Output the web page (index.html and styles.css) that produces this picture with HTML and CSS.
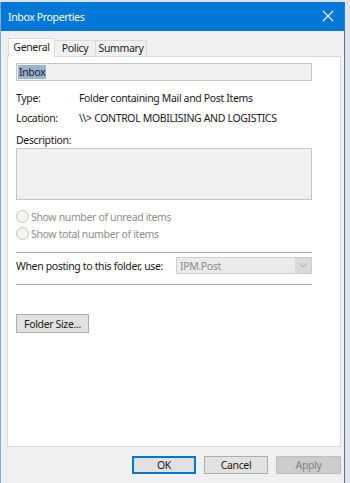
FILE: index.html
```html
<!DOCTYPE html>
<html lang="en">
<head>
    <meta charset="UTF-8">
    <title>Inbox Properties</title>
    <link rel="stylesheet" href="styles.css">
</head>
<body>
    <div class="window">
        <!-- Title bar -->
        <div class="titlebar">
            <span>Inbox Properties</span>
            <svg class="close" width="12" height="12" viewBox="0 0 12 12">
                <path d="M1 1 L11 11 M11 1 L1 11" stroke="#ffffff" stroke-width="1.2" fill="none"/>
            </svg>
        </div>

        <div class="content">
            <!-- Tabs -->
            <div class="tabs">
                <div class="tab active tab-general">General</div>
                <div class="tab tab-policy">Policy</div>
                <div class="tab tab-summary">Summary</div>
            </div>

            <!-- General panel -->
            <div class="panel">
                <div class="name-box"><span class="selected">Inbox</span></div>

                <div class="info-row">
                    <span class="label">Type:</span>
                    <span>Folder containing Mail and Post Items</span>
                </div>
                <div class="info-row">
                    <span class="label">Location:</span>
                    <span>\\&gt; CONTROL MOBILISING AND LOGISTICS</span>
                </div>

                <div class="desc-label">Description:</div>
                <div class="desc-box"></div>

                <div class="radio-row"><span class="radio"></span>Show number of unread items</div>
                <div class="radio-row"><span class="radio"></span>Show total number of items</div>

                <div class="separator"></div>
                <div class="posting-row">
                    <span>When posting to this folder, use:</span>
                    <div class="combo">
                        <span>IPM.Post</span>
                        <div class="combo-arrow">
                            <svg width="8" height="5" viewBox="0 0 8 5">
                                <path d="M0.5 0.5 L4 4 L7.5 0.5" stroke="#a8a8a8" stroke-width="1" fill="none"/>
                            </svg>
                        </div>
                    </div>
                </div>
                <div class="separator"></div>

                <button class="btn folder-btn">Folder Size...</button>
            </div>

            <!-- Dialog buttons -->
            <div class="footer">
                <button class="btn default">OK</button>
                <button class="btn">Cancel</button>
                <button class="btn disabled">Apply</button>
            </div>
        </div>
    </div>
</body>
</html>
```

FILE: styles.css
```css
body {
    margin: 0;
    padding: 0;
    background-color: #dfe5eb;
    font-family: 'Segoe UI', 'Noto Sans', sans-serif;
    font-size: 10.5px;
    letter-spacing: -0.35px;
    color: #1a1a1a;
}

/* Window frame */
.window {
    width: 343px;
    margin-top: 2px;
    border-left: 1px solid #7fb0dc;
    border-right: 1px solid #4f6f8f;
    border-bottom: 1px solid #7fb0dc;
    background: #f0f0f0;
}

.titlebar {
    height: 29px;
    background-color: #0078d7;
    color: white;
    font-size: 10.5px;
    display: flex;
    justify-content: space-between;
    align-items: center;
    padding: 0 10px 0 7px;
}

.close {
    margin-top: -1px;
}

.content {
    padding: 7px 2px 0 6px;
    height: 450px;
}

/* Tabs */
.tabs {
    display: flex;
    align-items: flex-end;
    padding-left: 2px;
    height: 18px;
}

.tab {
    height: 16px;
    line-height: 15px;
    text-align: center;
    border: 1px solid #d9d9d9;
    border-bottom: none;
    margin-left: -1px;
    background: #f0f0f0;
    box-sizing: border-box;
}

.tab.active {
    height: 19px;
    line-height: 17px;
    background: white;
    margin-bottom: -1px;
    position: relative;
    z-index: 1;
}

.tab-general {
    width: 47px;
}

.tab-policy {
    width: 42px;
}

.tab-summary {
    width: 52px;
}

/* Panel */
.panel {
    width: 334px;
    height: 391px;
    box-sizing: border-box;
    border: 1px solid #d9d9d9;
    background: white;
    padding: 6px 28px 0 8px;
}

.name-box {
    height: 18px;
    box-sizing: border-box;
    border: 1px solid #c4c4c4;
    background: #f0f0f0;
    padding: 0 1px;
    display: flex;
    align-items: center;
}

.selected {
    background: #99b4d1;
    color: #1a1a1a;
    line-height: 14px;
    padding: 0 1px;
}

.info-row {
    display: flex;
    height: 20px;
    align-items: center;
    white-space: nowrap;
}

.name-box + .info-row {
    margin-top: 7px;
}

.info-row .label {
    width: 63px;
}

.desc-label {
    margin-top: 4px;
    height: 16px;
    line-height: 16px;
}

.desc-box {
    height: 52px;
    box-sizing: border-box;
    border: 1px solid #c4c4c4;
    background: #f0f0f0;
}

.radio-row {
    display: flex;
    align-items: center;
    height: 17px;
    color: #8d8d8d;
}

.desc-box + .radio-row {
    margin-top: 8px;
}

.radio {
    width: 11px;
    height: 11px;
    border: 1px solid #c2c2c2;
    border-radius: 50%;
    background: #f4f4f4;
    margin-right: 2px;
}

.separator {
    height: 1px;
    background: #a9a9a9;
    margin-top: 10px;
}

.posting-row {
    display: flex;
    justify-content: space-between;
    align-items: center;
    margin-top: 4px;
    white-space: nowrap;
}

.combo {
    width: 136px;
    flex-shrink: 0;
    height: 17px;
    box-sizing: border-box;
    border: 1px solid #cccccc;
    background: #ebebeb;
    color: #8d8d8d;
    display: flex;
    justify-content: space-between;
    align-items: center;
    padding-left: 3px;
}

.combo-arrow {
    width: 16px;
    height: 15px;
    background: #dadada;
    display: flex;
    align-items: center;
    justify-content: center;
}

/* Buttons */
.btn {
    font-family: 'Segoe UI', 'Noto Sans', sans-serif;
    font-size: 10.5px;
    letter-spacing: -0.35px;
    color: #1a1a1a;
    background: #e1e1e1;
    border: 1px solid #adadad;
    height: 18px;
    padding: 0;
    box-sizing: border-box;
}

.folder-btn {
    margin-top: 29px;
    width: 73px;
    height: 19px;
}

.footer {
    display: flex;
    justify-content: flex-end;
    gap: 8px;
    padding-top: 9px;
    width: 334px;
}

.footer .btn {
    width: 64px;
}

.footer .btn.default {
    border: 2px solid #0078d7;
}

.footer .btn.disabled {
    width: 65px;
    background: #cccccc;
    border-color: #bfbfbf;
    color: #838383;
}
```
